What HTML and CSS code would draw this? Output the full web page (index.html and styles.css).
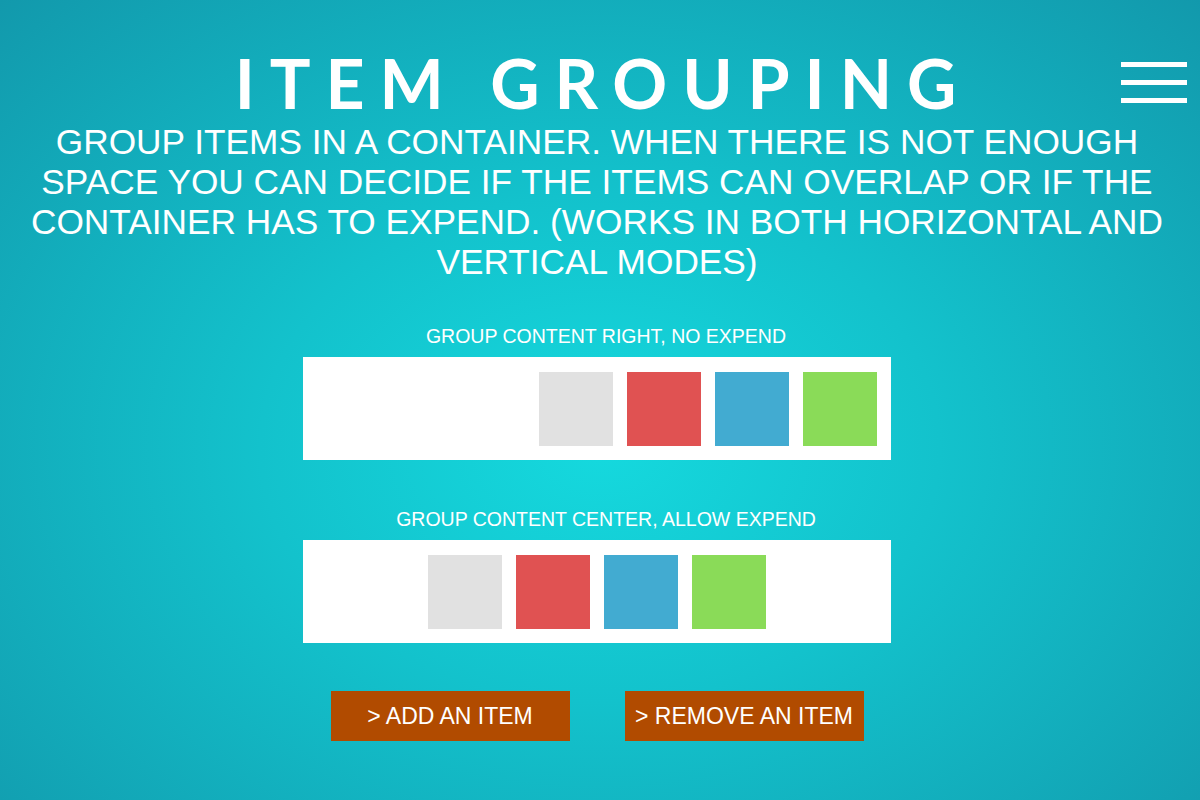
FILE: index.html
```html
<!DOCTYPE html>
<html>
<head>
<meta charset="utf-8">
<link rel="stylesheet" href="styles.css">
</head>
<body>
<div class="page">
  <header class="header">
    <h1 class="title">ITEM GROUPING</h1>
    <div class="menu"><span></span><span></span><span></span></div>
  </header>
  <p class="intro">GROUP ITEMS IN A CONTAINER. WHEN THERE IS NOT ENOUGH<br>SPACE YOU CAN DECIDE IF THE ITEMS CAN OVERLAP OR IF THE<br>CONTAINER HAS TO EXPEND. (WORKS IN BOTH HORIZONTAL AND<br>VERTICAL MODES)</p>
  <section class="group">
    <div class="label">GROUP CONTENT RIGHT, NO EXPEND</div>
    <div class="box box-right">
      <div class="item grey"></div>
      <div class="item red"></div>
      <div class="item blue"></div>
      <div class="item green"></div>
    </div>
  </section>
  <section class="group group-2">
    <div class="label">GROUP CONTENT CENTER, ALLOW EXPEND</div>
    <div class="box box-center">
      <div class="item grey"></div>
      <div class="item red"></div>
      <div class="item blue"></div>
      <div class="item green"></div>
    </div>
  </section>
  <div class="buttons">
    <button class="btn">&gt; ADD AN ITEM</button>
    <button class="btn">&gt; REMOVE AN ITEM</button>
  </div>
</div>
</body>
</html>
```

FILE: styles.css
```css
html, body {
  margin: 0;
  padding: 0;
  height: 100%;
}
body {
  background: radial-gradient(ellipse farthest-corner at 50% 56%, #15d9de 0%, #13c2cc 40%, #1299ac 100%);
  font-family: "Liberation Sans", Arial, sans-serif;
  color: #fff;
  overflow: hidden;
}
.page {
  box-sizing: border-box;
  width: 1200px;
  height: 800px;
  padding-right: 6px;
  display: flex;
  flex-direction: column;
  align-items: center;
}
.header {
  position: relative;
  width: 100%;
  display: flex;
  justify-content: center;
}
.title {
  margin: 40px 0 0 12px;
  font-family: Lato, "Open Sans", sans-serif;
  font-weight: 700;
  font-size: 68px;
  line-height: 86px;
  letter-spacing: 14.9px;
}
.menu {
  position: absolute;
  top: 62px;
  right: 7px;
  width: 66px;
  display: flex;
  flex-direction: column;
  gap: 13px;
}
.menu span {
  display: block;
  height: 5px;
  background: #fff;
}
.intro {
  margin: -4px 0 0;
  font-size: 35.25px;
  line-height: 40px;
  text-align: center;
  white-space: nowrap;
}
.group {
  margin-top: 43px;
  display: flex;
  flex-direction: column;
  align-items: center;
}
.group-2 {
  margin-top: 48px;
}
.label {
  font-size: 19.5px;
  line-height: 22px;
  margin-bottom: 10px;
  padding-left: 18px;
}
.box {
  width: 560px;
  height: 74px;
  padding: 15px 14px 14px;
  background: #fff;
  display: flex;
  gap: 14px;
}
.box-right { justify-content: flex-end; }
.box-center { justify-content: center; }
.item {
  width: 74px;
  height: 74px;
}
.grey { background: #e1e1e1; }
.red { background: #e05252; }
.blue { background: #42abd1; }
.green { background: #8adb58; }
.buttons {
  margin-top: 48px;
  display: flex;
  gap: 55px;
}
.btn {
  width: 239px;
  height: 50px;
  border: 0;
  background: #b14b00;
  color: #fff;
  font-family: "Liberation Sans", Arial, sans-serif;
  font-size: 23px;
  padding: 0;
}
```
